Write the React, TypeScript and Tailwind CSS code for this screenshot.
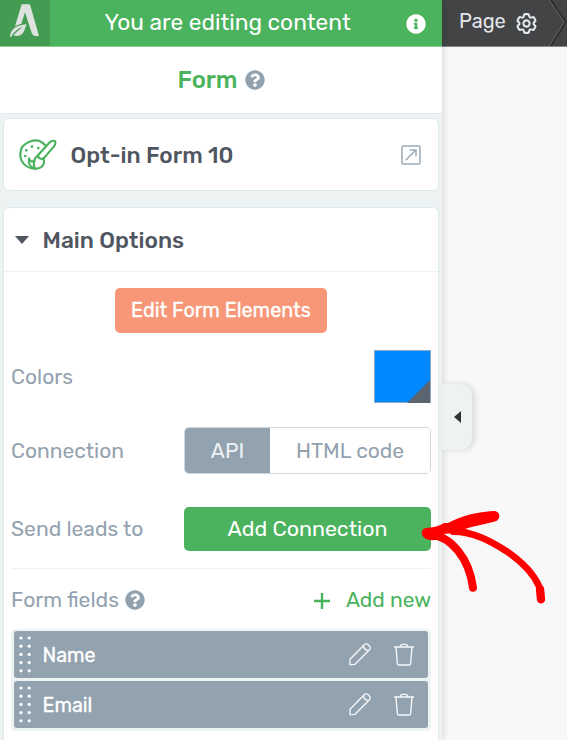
import React from 'react';
import { FaInfoCircle, FaQuestionCircle } from 'react-icons/fa';
import { HiOutlineCog6Tooth } from 'react-icons/hi2';

interface FormField {
  id: string;
  label: string;
}

const fields: FormField[] = [
  { id: 'name', label: 'Name' },
  { id: 'email', label: 'Email' },
];

const LogoIcon: React.FC = () => (
  <svg className="w-[50px] h-[46px]" viewBox="0 0 150 138" fill="#dfe3e0">
    <path d="M65 13h21c3 0 4 1 5 4l25 87v5l-9-1c-7-1-10-4-12-10L75 37 64 72c-6 1-12 3-19 7Z" />
    <path d="M80 73c-5 11-7 24-15 30-7 6-17 6-25 3 8-9 18-18 29-26-15 5-29 16-36 32l-3-2c1-21 18-35 50-37Z" />
  </svg>
);

const PaletteIcon: React.FC = () => (
  <svg className="w-[38px] h-[32px]" viewBox="0 0 114 96" fill="none" stroke="#4bb35e" strokeWidth="6.5" strokeLinecap="round" strokeLinejoin="round">
    <path d="M78 18C67 6 51 1 35 7 13 14 2 31 4 52c3 22 22 37 45 37 20 0 31-14 24-30" />
    <path d="M57 49 91 11c8-8 20-7 18 0 0 4-1 7-4 11L74 58" />
    <path d="M57 49c-1 7 10 14 17 9M57 50c-11 4-15 20-11 38M47 66c-9 3-15 1-17-8-3 16 4 28 19 31" />
    <path d="M22 34v.1M39 23v.1M58 27v.1M19 51v.1" strokeWidth="8" />
  </svg>
);

const PencilIcon: React.FC = () => (
  <svg className="w-[22px] h-[23px]" viewBox="0 0 66 69" fill="none" stroke="#f5f7f8" strokeWidth="4" strokeLinejoin="round">
    <path d="M3 65V49L45 6c4-4 9-4 13-1l3 4c4 4 3 9-1 13L18 64Z" />
    <path d="M43 8c1 9 6 14 16 15" />
  </svg>
);

const TrashIcon: React.FC = () => (
  <svg className="w-5 h-[23px]" viewBox="0 0 60 69" fill="none" stroke="#f5f7f8" strokeWidth="4" strokeLinejoin="round">
    <path d="M0 12h60M6 13l4 48c0 3 1 5 4 5h32c3 0 4-2 4-5l4-48M19 11c1-5 3-7 7-7h9c4 0 6 2 7 7" />
  </svg>
);

const OpenIcon: React.FC = () => (
  <svg className="w-5 h-5" viewBox="0 0 60 60" fill="none" stroke="#9bacb8" strokeWidth="4.5">
    <rect x="3" y="3" width="54" height="54" rx="3" />
    <path d="m14 46 30-30M26 15h19v19" />
  </svg>
);

const DragHandle: React.FC = () => (
  <svg className="w-3 h-[37px]" viewBox="0 0 12 37" fill="#fff">
    {[2, 10.2, 18.4, 26.6, 34.8].map((y) => (
      <g key={y}>
        <circle cx="2" cy={y} r="1.6" />
        <circle cx="10.2" cy={y} r="1.6" />
      </g>
    ))}
  </svg>
);

const FieldRow: React.FC<{ field: FormField }> = ({ field }) => (
  <div className="flex h-[47px] items-center rounded-[3px] bg-[#93a2af] pl-[5px] pr-[14px]">
    <DragHandle />
    <span className="ml-[11.5px] mt-[2px] text-[19.7px] text-white [-webkit-text-stroke:0.3px_#fff]">{field.label}</span>
    <div className="ml-auto flex items-center gap-[23px]">
      <PencilIcon />
      <TrashIcon />
    </div>
  </div>
);

const PointerArrow: React.FC = () => (
  <svg className="pointer-events-none absolute left-[420px] top-[506px] z-20 h-[100px] w-[130px]" viewBox="750 48 390 300" fill="none" stroke="#f00" strokeLinecap="round">
    <path d="M766 114c22-2 38-4 52-13 6-3 11-1 16-2 39-22 90-33 137-36 22 0 21 26 6 31-31 8-62 14-91 22l20 8-40 10c-15-5-38-5-60 1l15 12-33 4c-38-2-40-33-21-37Z" fill="#f00" stroke="none" />
    <path d="M778 134c66 2 120 74 131 159" strokeWidth="24" />
    <path d="M850 125c60 0 112 28 160 59 45 31 80 64 98 107" strokeWidth="20" />
    <path d="M1110 297l3 31" strokeWidth="25" />
  </svg>
);

const App: React.FC = () => {
  return (
    <div className="relative flex h-[740px] w-[567px] overflow-hidden bg-[#f8f8f8] font-['Rubik','Roboto',sans-serif]">
      <aside className="relative z-10 flex w-[442px] shrink-0 flex-col bg-[#edf2f3] shadow-[0_0_8px_rgba(0,0,0,0.18)]">
        <header className="flex h-[47px] shrink-0 items-center border-b border-[#86c991] bg-[#4bb35e] text-white">
          <div className="h-[46px] w-[50px] bg-[#439c52]">
            <LogoIcon />
          </div>
          <span className="ml-[54.5px] w-[250px] whitespace-nowrap text-[22.7px]">You are editing content</span>
          <FaInfoCircle className="ml-[51.5px] mt-px h-5 w-5" />
        </header>

        <div className="flex h-[67px] shrink-0 items-center justify-center gap-[7px] border-b border-[#dfe8ea] bg-white">
          <h1 className="text-[24px] font-medium text-[#4bb35e]">Form</h1>
          <FaQuestionCircle className="h-5 w-5 text-[#93a2af]" />
        </div>

        <div className="mx-[3px] mt-1 flex h-[73px] shrink-0 items-center rounded-[6px] border border-[#dfe8ea] bg-white pl-[15px] pr-[17px]">
          <PaletteIcon />
          <span className="ml-[13.5px] mt-[3px] text-[22.7px] font-medium text-[#50565f]">Opt-in Form 10</span>
          <span className="ml-auto">
            <OpenIcon />
          </span>
        </div>

        <section className="mx-[3px] mt-4 flex-1 rounded-t-[6px] border border-b-0 border-[#dfe8ea] bg-white">
          <div className="flex h-[64px] items-center border-b border-[#f0f3f4] pl-[11px]">
            <svg className="h-2 w-[14px]" viewBox="0 0 14 8" fill="#50565f">
              <path d="M0 0h14L7 8Z" />
            </svg>
            <h2 className="ml-[13.5px] mt-[3px] text-[22.7px] font-medium text-[#50565f]">Main Options</h2>
          </div>

          <div className="px-[7px] pt-4 text-[21px] text-[#93a2af]">
            <button className="mx-auto block h-[45px] w-[212px] whitespace-nowrap rounded-[5px] bg-[#f79778] pt-px text-[19.8px] text-white [-webkit-text-stroke:0.3px_#fff]">
              Edit Form Elements
            </button>

            <div className="mt-[17px] flex h-[53px] items-center justify-between">
              <span>Colors</span>
              <div className="h-[53px] w-[57px] border border-[#8fa9c4] bg-[#0088ff]">
                <svg className="ml-auto mt-[29px] h-[23px] w-[23px]" viewBox="0 0 23 23" fill="#5a6570">
                  <path d="M23 0v23H0Z" />
                </svg>
              </div>
            </div>

            <div className="mt-6 flex h-[47px] items-center justify-between">
              <span>Connection</span>
              <div className="flex h-[47px] w-[247px] overflow-hidden rounded-[5px] border border-[#cdd6dd]">
                <button className="w-[85px] bg-[#93a2af] text-[#eef2f4]">API</button>
                <button className="flex-1 bg-white">HTML code</button>
              </div>
            </div>

            <div className="mt-[33px] flex h-[44px] items-center justify-between">
              <span className="text-[21.1px]">Send leads to</span>
              <button className="h-[44px] w-[247px] rounded-[5px] bg-[#4bb35e] text-[21.4px] text-white">Add Connection</button>
            </div>

            <div className="mt-[17px] flex h-[61px] items-center border-t border-[#f0f3f4] pt-[2px]">
              <span className="text-[21.2px]">Form fields</span>
              <FaQuestionCircle className="ml-[6px] h-5 w-5" />
              <button className="ml-auto flex items-center gap-4 text-[#4bb35e]">
                <svg className="mt-[2px] h-4 w-4" viewBox="0 0 16 16" stroke="#4bb35e" strokeWidth="2.4">
                  <path d="M8 0v16M0 8h16" />
                </svg>
                <span>Add new</span>
              </button>
            </div>

            <div className="flex flex-col gap-[3px] rounded-[4px] bg-[#edf2f3] p-[3px] pt-[2px]">
              {fields.map((field) => (
                <FieldRow key={field.id} field={field} />
              ))}
            </div>
          </div>
        </section>

        {/* Panel collapse tab */}
        <button className="absolute left-[442px] top-[384px] flex h-[66px] w-[30px] items-center rounded-r-[12px] bg-[#edf2f3] pl-3 shadow-[3px_0_6px_rgba(0,0,0,0.12)]">
          <svg className="h-3 w-[7px]" viewBox="0 0 7 12" fill="#333">
            <path d="M7 0v12L0 6Z" />
          </svg>
        </button>
      </aside>

      <main className="flex-1">
        <nav className="flex h-[47px] items-center border-b border-[#858585] bg-[#434446] pl-[17px] text-[#e3e6ea]">
          <span className="-mt-[4px] text-[20px]">Page</span>
          <HiOutlineCog6Tooth className="ml-[8px] h-[25px] w-[25px]" strokeWidth={2} />
          <svg className="ml-auto h-[46px] w-[18px]" viewBox="0 0 18 46" fill="none">
            <path d="M2 0 17 22 2 46" stroke="#2c2d2e" strokeWidth="1.5" />
            <path d="M0 0 15 22 0 46" stroke="#5c5d5f" />
          </svg>
        </nav>
      </main>

      <PointerArrow />
    </div>
  );
};

export default App;
